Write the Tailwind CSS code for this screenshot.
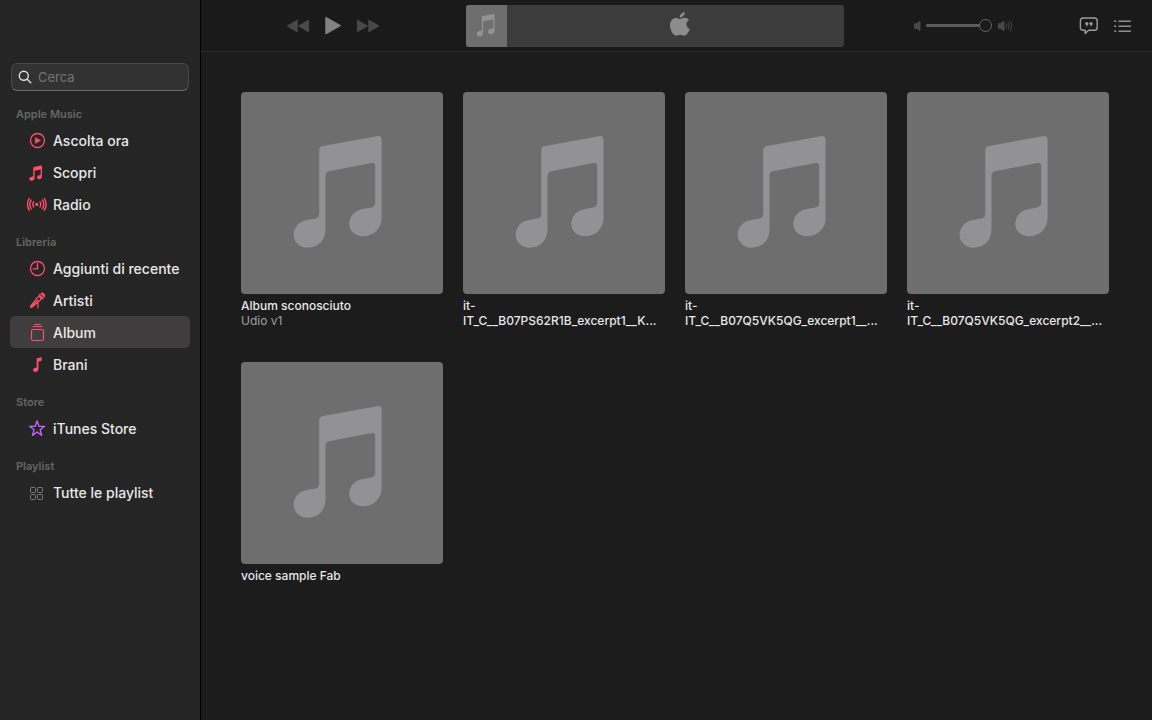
<!DOCTYPE html>
<html lang="it">
<head>
  <meta charset="UTF-8" />
  <meta name="viewport" content="width=device-width, initial-scale=1.0"/>
  <title>Musica</title>
  <script src="https://cdn.jsdelivr.net/npm/@tailwindcss/browser@4"></script>
</head>
<body class="flex min-h-screen bg-[#1c1c1c] font-[Inter,sans-serif] text-[#e8e8e8]">
  <!-- shared artwork placeholder -->
  <svg class="hidden">
    <symbol id="artwork" viewBox="0 0 202 202">
      <path d="M82 54 L136 44.2 Q140.6 43.5 140.6 48 V126 C140.6 137 132 144.3 122 144.3 C114 144.3 108.3 139 108.3 132 C108.3 124 114 118.5 122 117 L130 115.5 Q134.2 114.7 134.2 110.5 V74 Q134.2 70.3 130.5 71 L88 79.3 Q84.5 80 84.5 84 V137 C84.5 148.5 77 155.7 66.5 155.7 C58.5 155.7 52.7 150 52.7 143 C52.7 135 58 129.5 66 128 L75 126.4 Q78.2 125.7 78.2 121.5 V58 Q78.2 54.7 82 54 Z" fill="#929294"/>
    </symbol>
  </svg>

  <aside class="w-[201px] shrink-0 border-r border-black bg-[#252525] px-[10px] pt-[63px]">
    <label class="mx-px mb-px flex h-7 items-center gap-[6px] rounded-md border border-[#484848] border-b-[#6a6a6a] bg-[#323232] pl-[6px]">
      <svg class="size-[14px] shrink-0" viewBox="0 0 14 14" fill="none" stroke="#dcdcdc" stroke-width="1.4" stroke-linecap="round"><circle cx="5.8" cy="5.8" r="4.5"/><path d="M9.2 9.2 L12.8 12.8"/></svg>
      <input type="search" placeholder="Cerca" aria-label="Cerca" class="w-full min-w-0 bg-transparent pt-0.5 text-[13px] outline-none placeholder:text-[#747474]">
    </label>

    <nav>
      <h2 class="flex h-8 items-center pt-3 pl-[6px] text-[11px] font-semibold text-[#656565]">Apple Music</h2>
      <a href="#" class="flex h-8 items-center gap-[6px] rounded-[5px] pl-[17px] text-sm font-medium whitespace-nowrap">
        <svg class="size-5 shrink-0" viewBox="0 0 20 20"><circle cx="10.5" cy="10.5" r="7" fill="none" stroke="#ff4e6b" stroke-width="1.3"/><path d="M8.3 7.6 V13.4 L13.5 10.5 Z" fill="#ff4e6b" stroke="#ff4e6b" stroke-width=".6" stroke-linejoin="round"/></svg>
        <span class="pt-0.5">Ascolta ora</span>
      </a>
      <a href="#" class="flex h-8 items-center gap-[6px] rounded-[5px] pl-[17px] text-sm font-medium whitespace-nowrap">
        <svg class="size-5 shrink-0" viewBox="0 0 20 20" fill="#ff4e6b"><path d="M7 5.1 L14 3.5 Q15 3.3 15 4.3 V14.2 C15 16.2 13.8 17.2 12.2 17.2 C11 17.2 10.2 16.5 10.2 15.4 C10.2 14.2 11 13.5 12.2 13.3 L13.1 13.1 Q13.7 13 13.7 12.3 V7.4 L7.6 8.8 V15.8 C7.6 17.8 6.3 18.8 4.7 18.8 C3.2 18.8 2.2 18 2.2 16.9 C2.2 15.8 3 15.2 4.2 14.9 L5.6 14.6 Q6.2 14.5 6.2 13.8 V6.1 Q6.2 5.3 7 5.1 Z"/></svg>
        <span class="pt-0.5">Scopri</span>
      </a>
      <a href="#" class="flex h-8 items-center gap-[6px] rounded-[5px] pl-[17px] text-sm font-medium whitespace-nowrap">
        <svg class="size-5 shrink-0" viewBox="0 0 20 20" fill="none" stroke="#ff4e6b" stroke-width="1.4" stroke-linecap="round"><circle cx="9.8" cy="10.4" r="1.7" fill="#ff4e6b" stroke="none"/><path d="M6.6 7.8 Q5 10.4 6.6 13 M4.2 6.1 Q1.4 10.4 4.2 14.7 M2.2 4.6 Q-1.2 10.4 2.2 16.2 M13 7.8 Q14.6 10.4 13 13 M15.4 6.1 Q18.2 10.4 15.4 14.7 M17.4 4.6 Q20.8 10.4 17.4 16.2"/></svg>
        <span class="pt-0.5">Radio</span>
      </a>

      <h2 class="flex h-8 items-center pt-3 pl-[6px] text-[11px] font-semibold text-[#656565]">Libreria</h2>
      <a href="#" class="flex h-8 items-center gap-[6px] rounded-[5px] pl-[17px] text-sm font-medium whitespace-nowrap">
        <svg class="size-5 shrink-0" viewBox="0 0 20 20" fill="none" stroke="#ff4e6b" stroke-width="1.3" stroke-linecap="round" stroke-linejoin="round"><circle cx="10.5" cy="10.5" r="7"/><path d="M10.5 5.5 V10.8 H6.2"/></svg>
        <span class="pt-0.5">Aggiunti di recente</span>
      </a>
      <a href="#" class="flex h-8 items-center gap-[6px] rounded-[5px] pl-[17px] text-sm font-medium whitespace-nowrap">
        <svg class="size-5 shrink-0" viewBox="0 0 20 20" fill="none" stroke="#ff4e6b" stroke-width="1.2" stroke-linecap="round" stroke-linejoin="round"><path d="M13.6 3.4 A2.8 2.8 0 0 1 17.4 7.4 Z M12.6 4.2 L16.6 8.4 L14.4 9.4 L11.6 6.4 Z" fill="#ff4e6b" stroke-width=".5"/><path d="M11 7 L3.6 16.2 Q3.2 17.8 4.8 17.4 L13.8 9.8 M10.9 10.1 L5 16.2 M10.9 12.6 V17.8"/></svg>
        <span class="pt-0.5">Artisti</span>
      </a>
      <a href="#" aria-current="page" class="flex h-8 items-center gap-[6px] rounded-[5px] bg-[#403d3e] pl-[17px] text-sm font-medium whitespace-nowrap">
        <svg class="size-5 shrink-0" viewBox="0 0 20 20" fill="none" stroke="#ff4e6b" stroke-width="1.2" stroke-linecap="round"><path d="M7.5 2.5 H13.5 M6 4.5 H15"/><rect x="4.5" y="7.5" width="12" height="11" rx="1.8"/></svg>
        <span class="pt-0.5">Album</span>
      </a>
      <a href="#" class="flex h-8 items-center gap-[6px] rounded-[5px] pl-[17px] text-sm font-medium whitespace-nowrap">
        <svg class="size-5 shrink-0" viewBox="0 0 20 20" fill="#ff4e6b"><path d="M10.2 4.2 L14.2 3.2 Q14.8 3.1 14.8 3.7 V6.1 Q14.8 6.7 14.2 6.9 L11.4 7.6 V14.9 C11.4 16.9 10 17.9 8.3 17.9 C6.9 17.9 6 17.1 6 16 C6 14.9 6.8 14.2 8 14 L9.1 13.7 Q9.6 13.6 9.6 13 V5 Q9.6 4.4 10.2 4.2 Z"/></svg>
        <span class="pt-0.5">Brani</span>
      </a>

      <h2 class="flex h-8 items-center pt-3 pl-[6px] text-[11px] font-semibold text-[#656565]">Store</h2>
      <a href="#" class="flex h-8 items-center gap-[6px] rounded-[5px] pl-[17px] text-sm font-medium whitespace-nowrap">
        <svg class="size-5 shrink-0" viewBox="0 0 20 20" fill="none" stroke="#c765fa" stroke-width="1.3" stroke-linejoin="round"><path d="M10.1 2.8 L11.9 8.3 H17.7 L13.1 11.8 L14.8 17.4 L10.1 14 L5.4 17.4 L7.1 11.8 L2.5 8.3 H8.3 Z"/></svg>
        <span class="pt-0.5">iTunes Store</span>
      </a>

      <h2 class="flex h-8 items-center pt-3 pl-[6px] text-[11px] font-semibold text-[#656565]">Playlist</h2>
      <a href="#" class="flex h-8 items-center gap-[6px] rounded-[5px] pl-[17px] text-sm font-medium whitespace-nowrap">
        <svg class="size-5 shrink-0" viewBox="0 0 20 20" fill="none" stroke="#7c7c7c" stroke-width="1"><rect x="3.5" y="5.5" width="5" height="5" rx=".8"/><rect x="10.5" y="5.5" width="5" height="5" rx=".8"/><rect x="3.5" y="12.5" width="5" height="5" rx=".8"/><rect x="10.5" y="12.5" width="5" height="5" rx=".8"/></svg>
        <span class="pt-0.5">Tutte le playlist</span>
      </a>
    </nav>
  </aside>

  <div class="min-w-0 flex-1">
    <header class="grid h-[52px] grid-cols-[265fr_378fr_308fr] items-center border-b border-[#2a2a2a] bg-[#1a1a1a]">
      <div class="flex items-center justify-center gap-[14px] pr-px">
        <button aria-label="Indietro"><svg class="h-5 w-6" viewBox="0 0 24 20" fill="#494949" stroke="#494949" stroke-linejoin="round"><path d="M11.2 4.2 V15.8 L1.2 10 Z M22.6 4.2 V15.8 L12.6 10 Z"/></svg></button>
        <button aria-label="Riproduci"><svg class="h-5 w-[18px]" viewBox="0 0 18 20" fill="#828282" stroke="#828282" stroke-linejoin="round"><path d="M1.8 1.2 V18 L16.6 9.6 Z"/></svg></button>
        <button aria-label="Avanti"><svg class="h-5 w-6" viewBox="0 0 24 20" fill="#494949" stroke="#494949" stroke-linejoin="round"><path d="M1.4 4.2 V15.8 L11.4 10 Z M12.8 4.2 V15.8 L22.8 10 Z"/></svg></button>
      </div>

      <div class="flex h-[42px] overflow-hidden rounded-[3px] bg-[#3c3c3c]">
        <div class="w-[41px] shrink-0 bg-[#6e6e6e]"><svg class="size-[41px]"><use href="#artwork"/></svg></div>
        <div class="flex flex-1 items-center justify-center pb-1 pl-2">
          <svg class="h-6 w-5" viewBox="0 0 20 24" fill="#8c8c8c"><path d="M14.8 0 C15.1 2.8 12.6 5.7 9.8 5.6 C9.5 2.9 12.2 .2 14.8 0 Z M10.2 7 C11.2 7 12.6 5.7 14.8 5.8 C16.5 5.9 18 6.6 19 8 C15.3 10.3 15.9 15.5 19.8 17 C18.9 19.6 16.6 23.8 14.3 23.8 C12.7 23.8 12.1 22.8 10.3 22.8 C8.4 22.8 7.8 23.8 6.3 23.8 C3.5 23.8 0 18.4 0 13.3 C0 8.4 3.1 5.9 6 5.9 C7.9 5.9 9.2 7 10.2 7 Z"/></svg>
        </div>
      </div>

      <div class="flex items-center justify-between pr-[19px] pl-[70px]">
        <div class="flex items-center gap-[5px]">
          <svg class="h-4 w-[7px]" viewBox="0 0 7 16" fill="#484848"><path d="M0 5.8 Q0 5.2 .6 5.2 H2.5 L5.6 2.9 Q6.4 2.6 6.4 3.4 V12.6 Q6.4 13.4 5.6 13.1 L2.5 10.8 H.6 Q0 10.8 0 10.2 Z"/></svg>
          <input type="range" aria-label="Volume" value="100" class="h-[3px] w-[66px] appearance-none rounded-full bg-[#5c5c5c] [&::-webkit-slider-thumb]:size-[13px] [&::-webkit-slider-thumb]:appearance-none [&::-webkit-slider-thumb]:rounded-full [&::-webkit-slider-thumb]:border [&::-webkit-slider-thumb]:border-[#666666] [&::-webkit-slider-thumb]:bg-[#1a1a1a]">
          <svg class="h-4 w-4" viewBox="0 0 16 16"><path d="M1 5.8 Q1 5.2 1.6 5.2 H3.5 L6.6 2.9 Q7.4 2.6 7.4 3.4 V12.6 Q7.4 13.4 6.6 13.1 L3.5 10.8 H1.6 Q1 10.8 1 10.2 Z" fill="#484848"/><path d="M9.2 5.9 Q10.4 8 9.2 10.1 M11.3 4.4 Q13.4 8 11.3 11.6 M13.4 3 Q16.4 8 13.4 13" fill="none" stroke="#484848" stroke-width="1" stroke-linecap="round"/></svg>
        </div>
        <div class="flex items-center gap-[14px]">
          <button aria-label="Testo"><svg class="size-5" viewBox="0 0 20 20"><path d="M4.2 2 H15.4 Q18.2 2 18.2 4.8 V11.4 Q18.2 14.2 15.4 14.2 H9.6 L6.2 17.4 V14.2 H4.2 Q1.4 14.2 1.4 11.4 V4.8 Q1.4 2 4.2 2 Z" fill="none" stroke="#9c9c9c" stroke-width="1.4" stroke-linejoin="round"/><circle cx="7.8" cy="7.6" r="1.6" fill="#9c9c9c"/><circle cx="12" cy="7.6" r="1.6" fill="#9c9c9c"/><path d="M8.9 7.8 Q8.9 9.6 7.4 10.4 M13.1 7.8 Q13.1 9.6 11.6 10.4" fill="none" stroke="#9c9c9c" stroke-width=".9" stroke-linecap="round"/></svg></button>
          <button aria-label="In coda"><svg class="size-5" viewBox="0 0 20 20" stroke="#8e8e8e" stroke-width="1.4" stroke-linecap="round"><path d="M6 5.2 H17.4 M6 10.2 H17.4 M6 15.2 H17.4"/><path d="M2 5.2 H2.4 M2 10.2 H2.4 M2 15.2 H2.4" stroke-width="1.8"/></svg></button>
        </div>
      </div>
    </header>

    <main class="grid grid-cols-[repeat(auto-fill,202px)] gap-x-5 gap-y-[34px] px-10 pt-10 pb-10 text-xs leading-[15px] font-medium">
      <article>
        <svg class="mb-1 size-[202px] rounded-[4px] bg-[#6e6e6e]"><use href="#artwork"/></svg>
        <h3>Album sconosciuto</h3>
        <p class="font-normal text-[#a0a0a0]">Udio v1</p>
      </article>
      <article>
        <svg class="mb-1 size-[202px] rounded-[4px] bg-[#6e6e6e]"><use href="#artwork"/></svg>
        <h3 class="whitespace-nowrap">it-<br>IT_C__B07PS62R1B_excerpt1__K...</h3>
      </article>
      <article>
        <svg class="mb-1 size-[202px] rounded-[4px] bg-[#6e6e6e]"><use href="#artwork"/></svg>
        <h3 class="whitespace-nowrap">it-<br>IT_C__B07Q5VK5QG_excerpt1__...</h3>
      </article>
      <article>
        <svg class="mb-1 size-[202px] rounded-[4px] bg-[#6e6e6e]"><use href="#artwork"/></svg>
        <h3 class="whitespace-nowrap">it-<br>IT_C__B07Q5VK5QG_excerpt2__...</h3>
      </article>
      <article>
        <svg class="mb-1 size-[202px] rounded-[4px] bg-[#6e6e6e]"><use href="#artwork"/></svg>
        <h3>voice sample Fab</h3>
      </article>
    </main>
  </div>
</body>
</html>
